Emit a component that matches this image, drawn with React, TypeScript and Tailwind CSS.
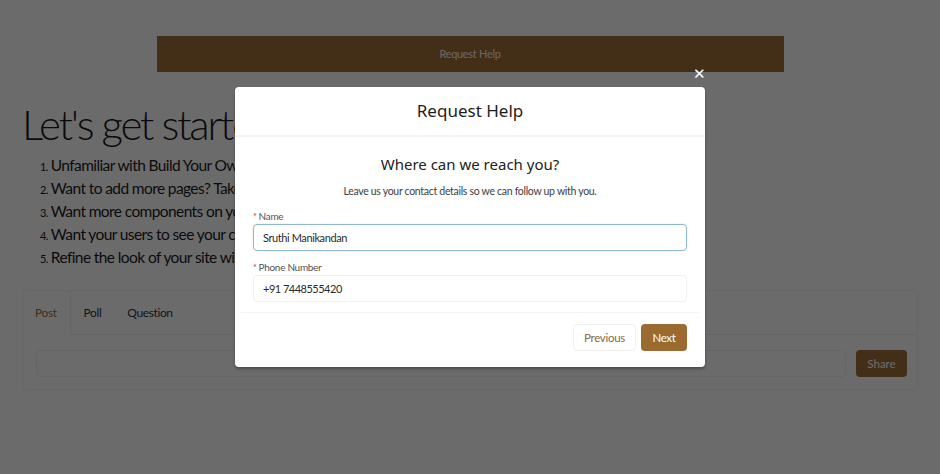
import React from "react";

const steps = [
  "Unfamiliar with Build Your Own? Take a quick tour of the builder.",
  "Want to add more pages? Take a look at the pages menu.",
  "Want more components on your page? Drag them in from the components panel.",
  "Want your users to see your community? Publish it from the top bar.",
  "Refine the look of your site with themes and branding.",
];

function Field({ label, value, focused, first }: { label: string; value: string; focused?: boolean; first?: boolean }) {
  return (
    <div className={first ? "mt-[10px]" : "mt-[9px]"}>
      <label className="flex h-[15px] items-center gap-[2px] text-[10px] tracking-[-0.3px] text-[#545454]">
        <span className="text-[9px] text-[#c23934]">*</span>
        {label}
      </label>
      <div
        className={
          focused
            ? "flex h-[27px] items-center rounded-[4px] border border-[#8fb7d6] px-[9px] text-[11px] tracking-[-0.4px] text-[#2b2b2b] shadow-[0_0_2px_#f3d9b4]"
            : "flex h-[27px] items-center rounded-[4px] border border-[#f1f1f1] px-[9px] text-[11px] tracking-[-0.5px] text-[#2b2b2b]"
        }
      >
        {value}
      </div>
    </div>
  );
}

export default function App() {
  return (
    <div className="relative h-[474px] w-[940px] overflow-hidden bg-white font-['Lato','Liberation_Sans',sans-serif]">
      {/* page behind the dialog */}
      <div className="flex flex-col">
        <div className="mt-[36px] flex justify-center">
          <div className="flex h-[36px] w-[627px] items-center justify-center bg-[#9d7037] text-[11px] tracking-[-0.3px] text-[#f4f4f4]">
            Request Help
          </div>
        </div>

        <h1 className="ml-[22px] mt-[26px] text-[42px] font-light leading-[52px] tracking-[-2.2px] text-[#1a1a1a]">
          Let's get started
        </h1>

        <ol className="ml-[40px] mt-[4px] flex flex-col">
          {steps.map((s, i) => (
            <li key={s} className="flex h-[23px] items-baseline gap-[3px] whitespace-nowrap text-[15.5px] leading-[23px] tracking-[-0.6px] text-[#1a1a1a]">
              <span className="text-[11px]">{i + 1}.</span>
              {s}
            </li>
          ))}
        </ol>

        <div className="mx-[22px] mt-[21px] h-[100px] rounded-[4px] border border-[#f4f4f4]">
          <div className="flex h-[44px] items-stretch text-[12px] tracking-[-0.4px]">
            <span className="flex items-center pl-[12px] pr-[13px] text-[#9d7037]">Post</span>
            <div className="flex flex-1 items-center rounded-bl-[4px] border-b border-l border-[#f0f0f0]">
              <span className="px-[13px] text-[#333]">Poll</span>
              <span className="px-[13px] text-[#333]">Question</span>
            </div>
          </div>
          <div className="mt-[15px] flex items-center gap-[10px] pl-[13px] pr-[10px]">
            <div className="h-[27px] flex-1 rounded-[4px] border border-[#f0f0f0]" />
            <div className="flex h-[27px] w-[51px] items-center justify-center rounded-[4px] bg-[#9d7037] text-[11.5px] text-white">
              Share
            </div>
          </div>
        </div>
      </div>

      {/* overlay */}
      <div className="absolute inset-0 flex justify-center bg-[rgba(2,0,1,0.58)] pt-[87px]">
        <div className="relative h-[280px] w-[470px] rounded-[4px] bg-white shadow-[0_2px_3px_rgba(0,0,0,0.3)]">
          <button className="absolute right-[-1px] top-[-21px] text-[15px] leading-none text-white">✕</button>
          <div className="flex h-[50px] items-center justify-center border-b-2 border-[#f3f3f3] font-['Noto_Sans',sans-serif] text-[17px] text-[#1d1d1d]">
            Request Help
          </div>
          <div className="px-[18px]">
            <div className="mt-[16px] text-center font-['Noto_Sans',sans-serif] text-[15px] text-[#222]">
              Where can we reach you?
            </div>
            <div className="mt-[8px] text-center text-[10.5px] tracking-[-0.3px] text-[#3e3e3e]">
              Leave us your contact details so we can follow up with you.
            </div>
            <Field label="Name" value="Sruthi Manikandan" focused first />
            <Field label="Phone Number" value="+91 7448555420" />
          </div>
          <div className="mx-[6px] mt-[10px] border-t border-[#f4f4f4]" />
          <div className="flex justify-end gap-[5px] pr-[18px] pt-[11px]">
            <button className="h-[27px] w-[63px] rounded-[4px] border border-[#f1f1f1] text-[11.5px] tracking-[-0.3px] text-[#8b6a44]">
              Previous
            </button>
            <button className="h-[27px] w-[46px] rounded-[4px] bg-[#9a6a2e] text-[11.5px] tracking-[-0.3px] text-white">
              Next
            </button>
          </div>
        </div>
      </div>
    </div>
  );
}
